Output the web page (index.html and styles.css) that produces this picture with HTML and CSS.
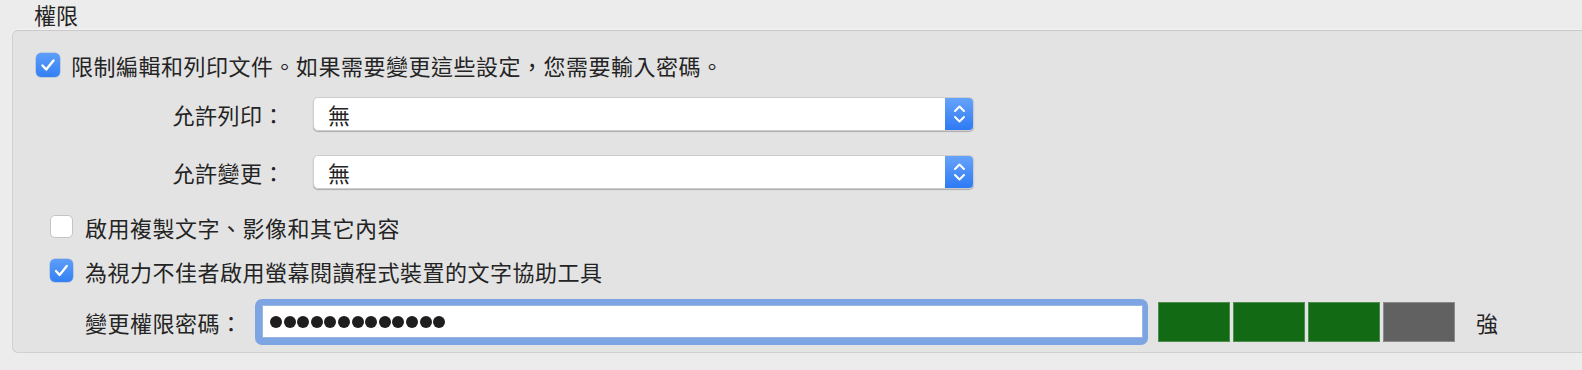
FILE: index.html
```html
<!DOCTYPE html>
<html lang="zh-Hant">
<head>
<meta charset="utf-8">
<title>權限</title>
<link rel="stylesheet" href="styles.css">
</head>
<body>
<div class="page">
  <div class="title">權限</div>
  <div class="box">
    <div class="row row-main">
      <span class="cb checked"><svg viewBox="0 0 24 24" width="24" height="24"><path d="M6.5 12.5 L10.2 16.5 L17.5 7.5" fill="none" stroke="#fff" stroke-width="2.4" stroke-linecap="round" stroke-linejoin="round"/></svg></span>
      <span class="txt">限制編輯和列印文件。如果需要變更這些設定，您需要輸入密碼。</span>
    </div>
    <div class="row row-select first">
      <span class="label">允許列印：</span>
      <div class="select">
        <span class="select-val">無</span>
        <span class="select-btn"><svg viewBox="0 0 29 34" width="29" height="34"><path d="M10 14 L14.5 9.5 L19 14" fill="none" stroke="#fff" stroke-width="2" stroke-linecap="round" stroke-linejoin="round"/><path d="M10 20 L14.5 24.5 L19 20" fill="none" stroke="#fff" stroke-width="2" stroke-linecap="round" stroke-linejoin="round"/></svg></span>
      </div>
    </div>
    <div class="row row-select second">
      <span class="label">允許變更：</span>
      <div class="select">
        <span class="select-val">無</span>
        <span class="select-btn"><svg viewBox="0 0 29 34" width="29" height="34"><path d="M10 14 L14.5 9.5 L19 14" fill="none" stroke="#fff" stroke-width="2" stroke-linecap="round" stroke-linejoin="round"/><path d="M10 20 L14.5 24.5 L19 20" fill="none" stroke="#fff" stroke-width="2" stroke-linecap="round" stroke-linejoin="round"/></svg></span>
      </div>
    </div>
    <div class="row row-sub first-sub">
      <span class="cb cb-sm"></span>
      <span class="txt">啟用複製文字、影像和其它內容</span>
    </div>
    <div class="row row-sub second-sub">
      <span class="cb cb-sm checked"><svg viewBox="0 0 23 23" width="23" height="23"><path d="M6 12 L9.6 16 L16.8 7" fill="none" stroke="#fff" stroke-width="2.3" stroke-linecap="round" stroke-linejoin="round"/></svg></span>
      <span class="txt">為視力不佳者啟用螢幕閱讀程式裝置的文字協助工具</span>
    </div>
    <div class="row row-pass">
      <span class="pass-label">變更權限密碼：</span>
      <div class="pass-field">
        <div class="pass-inner" aria-label="密碼">
          <span class="dot"></span><span class="dot"></span><span class="dot"></span><span class="dot"></span><span class="dot"></span><span class="dot"></span><span class="dot"></span><span class="dot"></span><span class="dot"></span><span class="dot"></span><span class="dot"></span><span class="dot"></span><span class="dot"></span>
        </div>
      </div>
      <div class="meter">
        <span class="bar on"></span><span class="bar on"></span><span class="bar on"></span><span class="bar off"></span>
      </div>
      <span class="strength">強</span>
    </div>
  </div>
</div>
</body>
</html>
```

FILE: styles.css
```css
html, body {
  margin: 0;
  padding: 0;
  background: #ececec;
  overflow: hidden;
}
body {
  font-family: "Noto Sans CJK TC", "Noto Sans", sans-serif;
  font-size: 22px;
  color: #242424;
  width: 1582px;
  height: 370px;
  text-spacing-trim: space-all;
}
.page {
  display: flex;
  flex-direction: column;
}
.title {
  height: 30px;
  line-height: 30px;
  padding-left: 34px;
  margin-top: -1px;
  margin-bottom: 1px;
}
.box {
  margin-left: 12px;
  margin-right: -20px;
  background: #e3e3e3;
  border: 1px solid #d0d0d0;
  border-top-color: #c9c9c9;
  border-radius: 6px;
  box-shadow: 0 -1px 0 #f2f2f2;
  padding: 18px 0 7px 0;
  height: 323px;
  box-sizing: border-box;
  display: flex;
  flex-direction: column;
}
.row {
  display: flex;
  align-items: center;
}
.txt {
  line-height: 30px;
  white-space: nowrap;
  letter-spacing: 0.5px;
}
.row-main {
  height: 32px;
  padding-left: 23px;
  gap: 11px;
}
.cb {
  width: 24px;
  height: 24px;
  flex: none;
  box-sizing: border-box;
  border-radius: 5px;
  background: #fff;
  border: 1px solid #c4c4c4;
  display: flex;
}
.cb svg { display: block; }
.cb.checked {
  border: none;
  background: linear-gradient(#5d9ef9, #3380f4);
  box-shadow: 0 0 0 0.5px rgba(30, 90, 200, 0.35);
}
.cb-sm {
  width: 23px;
  height: 23px;
}
.row-select {
  height: 34px;
}
.row-select.first { margin-top: 16px; }
.row-select.second { margin-top: 24px; }
.label {
  width: 272px;
  text-align: right;
  line-height: 30px;
  flex: none;
  letter-spacing: 0.5px;
}
.select {
  margin-left: 28px;
  width: 661px;
  height: 34px;
  box-sizing: border-box;
  background: #fff;
  border-radius: 5px;
  border: 1px solid #cdcdcd;
  box-shadow: 0 1px 1px rgba(0, 0, 0, 0.25);
  display: flex;
  align-items: center;
  overflow: hidden;
}
.select-val {
  flex: 1;
  padding-left: 14px;
  line-height: 30px;
}
.select-btn {
  width: 29px;
  height: 34px;
  flex: none;
  background: linear-gradient(#68a4fa, #2c79f4);
  display: flex;
  margin-right: -1px;
}
.select-btn svg { display: block; }
.row-sub {
  height: 23px;
  padding-left: 37px;
  gap: 12px;
}
.first-sub { margin-top: 26px; }
.second-sub { margin-top: 21px; }
.row-pass {
  margin-top: 17px;
  height: 46px;
  padding-left: 72px;
}
.pass-label {
  width: 170px;
  flex: none;
  line-height: 30px;
  letter-spacing: 0.5px;
  white-space: nowrap;
}
.pass-field {
  width: 893px;
  height: 46px;
  box-sizing: border-box;
  border-radius: 7px;
  background: #7ea5e3;
  padding: 6px 5px 7px 7px;
  flex: none;
}
.pass-inner {
  height: 100%;
  background: #fff;
  border: 1px solid #9ab5de;
  box-sizing: border-box;
  display: flex;
  align-items: center;
  gap: 1.6px;
  padding-left: 7px;
}
.dot {
  width: 12px;
  height: 12px;
  border-radius: 50%;
  background: #1e1e1e;
  flex: none;
}
.meter {
  margin-left: 10px;
  display: flex;
  gap: 3px;
  height: 40px;
  flex: none;
}
.bar {
  width: 72px;
  height: 40px;
  box-sizing: border-box;
}
.bar.on {
  background: #136a14;
  border: 1px solid #4f8a4f;
}
.bar.off {
  background: #616161;
  border: 1px solid #8a8a8a;
}
.strength {
  margin-left: 21px;
  line-height: 30px;
}
```
